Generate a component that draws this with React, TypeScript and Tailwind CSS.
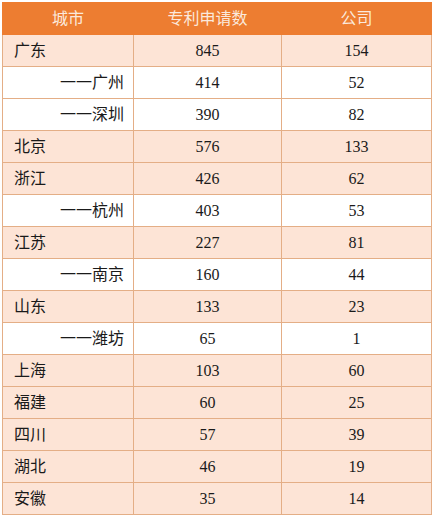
const rows: { name: string; city?: boolean; apps: number; companies: number }[] = [
  { name: "广东", apps: 845, companies: 154 },
  { name: "一一广州", city: true, apps: 414, companies: 52 },
  { name: "一一深圳", city: true, apps: 390, companies: 82 },
  { name: "北京", apps: 576, companies: 133 },
  { name: "浙江", apps: 426, companies: 62 },
  { name: "一一杭州", city: true, apps: 403, companies: 53 },
  { name: "江苏", apps: 227, companies: 81 },
  { name: "一一南京", city: true, apps: 160, companies: 44 },
  { name: "山东", apps: 133, companies: 23 },
  { name: "一一潍坊", city: true, apps: 65, companies: 1 },
  { name: "上海", apps: 103, companies: 60 },
  { name: "福建", apps: 60, companies: 25 },
  { name: "四川", apps: 57, companies: 39 },
  { name: "湖北", apps: 46, companies: 19 },
  { name: "安徽", apps: 35, companies: 14 },
];

const App = () => {
  return (
    <div className="w-[434px] h-[519px] bg-white pt-[2px] pl-[2px] font-['Liberation_Serif','Noto_Sans_CJK_SC',serif] text-[16px] text-[#1a1a1a]">
      <table className="w-[429px] table-fixed border-collapse">
        <colgroup>
          <col className="w-[131px]" />
          <col className="w-[148px]" />
          <col className="w-[150px]" />
        </colgroup>
        <thead>
          <tr className="h-[32px] bg-[#ed7d31] text-[#fbe9dc]">
            <th className="font-normal border border-[#ed7d31]">城市</th>
            <th className="font-normal border border-[#ed7d31]">专利申请数</th>
            <th className="font-normal border border-[#ed7d31]">公司</th>
          </tr>
        </thead>
        <tbody>
          {rows.map((r) => (
            <tr key={r.name} className={`h-[32px] ${r.city ? "bg-white" : "bg-[#fde4d6]"}`}>
              <td
                className={`border border-[#e4ae86] ${r.city ? "text-right pr-[9px]" : "text-left pl-[11px]"}`}
              >
                {r.name}
              </td>
              <td className="border border-[#e4ae86] text-center">{r.apps}</td>
              <td className="border border-[#e4ae86] text-center">{r.companies}</td>
            </tr>
          ))}
        </tbody>
      </table>
    </div>
  );
};

export default App;
